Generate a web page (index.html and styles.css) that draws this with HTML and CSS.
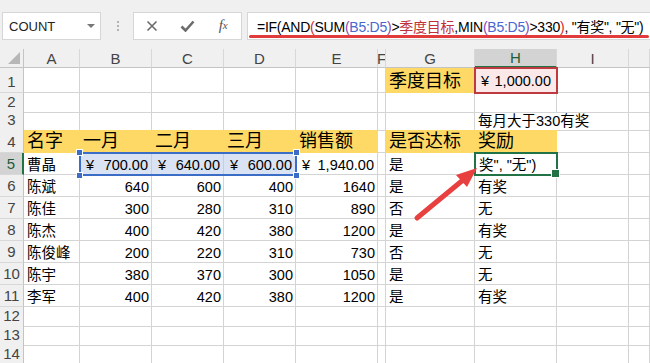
FILE: index.html
```html
<!DOCTYPE html>
<html lang="zh-CN">
<head>
    <meta charset="UTF-8">
    <meta name="viewport" content="width=device-width, initial-scale=1.0">
    <title>销售奖励表</title>
    <link rel="stylesheet" href="styles.css">
</head>
<body>

    <!-- Name box + formula bar -->
    <div class="toolbar">
        <div class="name-box">
            <span>COUNT</span>
            <span class="caret"></span>
        </div>
        <div class="grip"><i></i><i></i><i></i></div>
        <div class="fx-box">
            <span class="slot">
                <svg width="12" height="12" viewBox="0 0 12 12"><path d="M1.5 1.5 L10.5 10.5 M10.5 1.5 L1.5 10.5" stroke="#6b6b6b" stroke-width="1.6" fill="none"/></svg>
            </span>
            <span class="slot">
                <svg width="15" height="12" viewBox="0 0 15 12"><path d="M1.5 6.5 L5.5 10.5 L13.5 1.5" stroke="#6b6b6b" stroke-width="2.6" fill="none"/></svg>
            </span>
            <span class="slot fx">f<sub>x</sub></span>
        </div>
        <div class="formula">
            <span>=IF(AND<span class="p1">(</span>SUM<span class="p2">(</span><span class="ref">B5:D5</span><span class="p2">)</span>&gt;<span class="nm">季度目标</span>,MIN<span class="p2">(</span><span class="ref">B5:D5</span><span class="p2">)</span>&gt;330<span class="p1">)</span>, "有奖", "无")</span>
        </div>
    </div>

    <!-- Worksheet -->
    <div class="sheet">
        <div class="row head">
            <div class="corner"><span></span></div>
            <div class="col">A</div>
            <div class="col">B</div>
            <div class="col">C</div>
            <div class="col">D</div>
            <div class="col">E</div>
            <div class="col">F</div>
            <div class="col">G</div>
            <div class="col on">H</div>
            <div class="col">I</div>
            <div class="col"></div>
        </div>

        <div class="row r1">
            <div class="rh">1</div>
            <div class="c"></div>
            <div class="c"></div>
            <div class="c"></div>
            <div class="c"></div>
            <div class="c"></div>
            <div class="c"></div>
            <div class="c hl big">季度目标</div>
            <div class="c acc target"><span>¥</span><span>1,000.00</span></div>
            <div class="c"></div>
            <div class="c"></div>
        </div>

        <div class="row r2">
            <div class="rh">2</div>
            <div class="c"></div>
            <div class="c"></div>
            <div class="c"></div>
            <div class="c"></div>
            <div class="c"></div>
            <div class="c"></div>
            <div class="c"></div>
            <div class="c"></div>
            <div class="c"></div>
            <div class="c"></div>
        </div>

        <div class="row r3">
            <div class="rh">3</div>
            <div class="c"></div>
            <div class="c"></div>
            <div class="c"></div>
            <div class="c"></div>
            <div class="c"></div>
            <div class="c"></div>
            <div class="c"></div>
            <div class="c spill">每月大于330有奖</div>
            <div class="c"></div>
            <div class="c"></div>
        </div>

        <div class="row r4">
            <div class="rh">4</div>
            <div class="c hl big">名字</div>
            <div class="c hl big">一月</div>
            <div class="c hl big">二月</div>
            <div class="c hl big">三月</div>
            <div class="c hl big">销售额</div>
            <div class="c"></div>
            <div class="c hl big">是否达标</div>
            <div class="c hl big">奖励</div>
            <div class="c"></div>
            <div class="c"></div>
        </div>

        <div class="row rn">
            <div class="rh on">5</div>
            <div class="c">曹晶</div>
            <div class="sel">
                <div class="c acc"><span>¥</span><span>700.00</span></div>
                <div class="c acc"><span>¥</span><span>640.00</span></div>
                <div class="c acc"><span>¥</span><span>600.00</span></div>
                <i class="handle tl"></i>
                <i class="handle tr"></i>
                <i class="handle bl"></i>
                <i class="handle br"></i>
            </div>
            <div class="c acc"><span>¥</span><span>1,940.00</span></div>
            <div class="c"></div>
            <div class="c">是</div>
            <div class="c active">奖", "无")</div>
            <div class="c"></div>
            <div class="c"></div>
        </div>

        <div class="row rn">
            <div class="rh">6</div>
            <div class="c">陈斌</div>
            <div class="c num">640</div>
            <div class="c num">600</div>
            <div class="c num">400</div>
            <div class="c num">1640</div>
            <div class="c"></div>
            <div class="c">是</div>
            <div class="c">有奖</div>
            <div class="c"></div>
            <div class="c"></div>
        </div>

        <div class="row rn">
            <div class="rh">7</div>
            <div class="c">陈佳</div>
            <div class="c num">300</div>
            <div class="c num">280</div>
            <div class="c num">310</div>
            <div class="c num">890</div>
            <div class="c"></div>
            <div class="c">否</div>
            <div class="c">无</div>
            <div class="c"></div>
            <div class="c"></div>
        </div>

        <div class="row rn">
            <div class="rh">8</div>
            <div class="c">陈杰</div>
            <div class="c num">400</div>
            <div class="c num">420</div>
            <div class="c num">380</div>
            <div class="c num">1200</div>
            <div class="c"></div>
            <div class="c">是</div>
            <div class="c">有奖</div>
            <div class="c"></div>
            <div class="c"></div>
        </div>

        <div class="row rn">
            <div class="rh">9</div>
            <div class="c">陈俊峰</div>
            <div class="c num">200</div>
            <div class="c num">220</div>
            <div class="c num">310</div>
            <div class="c num">730</div>
            <div class="c"></div>
            <div class="c">否</div>
            <div class="c">无</div>
            <div class="c"></div>
            <div class="c"></div>
        </div>

        <div class="row rn">
            <div class="rh">10</div>
            <div class="c">陈宇</div>
            <div class="c num">380</div>
            <div class="c num">370</div>
            <div class="c num">300</div>
            <div class="c num">1050</div>
            <div class="c"></div>
            <div class="c">是</div>
            <div class="c">无</div>
            <div class="c"></div>
            <div class="c"></div>
        </div>

        <div class="row rn">
            <div class="rh">11</div>
            <div class="c">李军</div>
            <div class="c num">400</div>
            <div class="c num">420</div>
            <div class="c num">380</div>
            <div class="c num">1200</div>
            <div class="c"></div>
            <div class="c">是</div>
            <div class="c">有奖</div>
            <div class="c"></div>
            <div class="c"></div>
        </div>

        <div class="row re">
            <div class="rh">12</div>
            <div class="c"></div><div class="c"></div><div class="c"></div><div class="c"></div><div class="c"></div>
            <div class="c"></div><div class="c"></div><div class="c"></div><div class="c"></div><div class="c"></div>
        </div>
        <div class="row re">
            <div class="rh">13</div>
            <div class="c"></div><div class="c"></div><div class="c"></div><div class="c"></div><div class="c"></div>
            <div class="c"></div><div class="c"></div><div class="c"></div><div class="c"></div><div class="c"></div>
        </div>
        <div class="row re">
            <div class="rh">14</div>
            <div class="c"></div><div class="c"></div><div class="c"></div><div class="c"></div><div class="c"></div>
            <div class="c"></div><div class="c"></div><div class="c"></div><div class="c"></div><div class="c"></div>
        </div>
    </div>

    <!-- Red callout arrow -->
    <svg class="arrow" width="650" height="363" viewBox="0 0 650 363">
        <line x1="417" y1="218" x2="463" y2="180" stroke="#e8403f" stroke-width="5" stroke-linecap="round"/>
        <polygon points="477,168 456,175 467,187" fill="#e8403f"/>
    </svg>

</body>
</html>
```

FILE: styles.css
```css
/* Global */
* {
    box-sizing: border-box;
}

html, body {
    margin: 0;
    padding: 0;
}

body {
    width: 650px;
    height: 363px;
    overflow: hidden;
    position: relative;
    background: #fff;
    color: #000;
    font-family: "Liberation Sans", "Noto Sans CJK SC", sans-serif;
}

/* Formula bar */
.toolbar {
    height: 49px;
    background: #f0f0f0;
    display: flex;
    align-items: flex-start;
    padding: 12px 0 0 2px;
}

.toolbar > * {
    flex-shrink: 0;
}

.name-box {
    width: 99px;
    height: 28px;
    background: #fff;
    border: 1px solid #d6d6d6;
    display: flex;
    align-items: center;
    justify-content: space-between;
    padding: 0 5px 0 6px;
    font-size: 13px;
    color: #222;
}

.caret {
    border-left: 4px solid transparent;
    border-right: 4px solid transparent;
    border-top: 4px solid #777;
}

.grip {
    display: flex;
    flex-direction: column;
    gap: 2px;
    margin: 9px 14px 0 16px;
}

.grip i {
    display: block;
    width: 2px;
    height: 2px;
    background: #b3b3b3;
}

.fx-box {
    width: 109px;
    height: 28px;
    background: #fff;
    border: 1px solid #d6d6d6;
    display: flex;
}

.fx-box .slot {
    flex: 1;
    display: flex;
    align-items: center;
    justify-content: center;
}

.fx {
    font-family: "Liberation Serif", serif;
    font-style: italic;
    font-size: 15px;
    color: #555;
    padding-bottom: 2px;
}

.fx sub {
    font-size: 11px;
    vertical-align: -1px;
}

.formula {
    width: 410px;
    height: 28px;
    margin-left: 5px;
    background: #fff;
    border: 1px solid #d6d6d6;
    display: flex;
    align-items: center;
    padding: 0 0 1px 9px;
    font-size: 14px;
    letter-spacing: -0.25px;
    white-space: nowrap;
    position: relative;
}

/* red highlight under the formula */
.formula::after {
    content: "";
    position: absolute;
    left: 1px;
    width: 400px;
    bottom: 1px;
    height: 3px;
    border-radius: 2px;
    background: #e23b3b;
}

.formula .p1 { color: #d9262c; }
.formula .p2 { color: #8e44ad; }
.formula .ref { color: #4a66cf; }
.formula .nm { color: #c0313a; }

/* Worksheet grid */
.row {
    display: grid;
    grid-template-columns: 24px 56px 72px 72px 72px 82px 8px 89px 82px 72px 1fr;
}

.head { height: 19px; }
.r1 { height: 25px; }
.r2 { height: 18px; }
.r3 { height: 19px; }
.r4 { height: 23px; }
.rn { height: 22px; }
.re { height: 19px; }

.corner {
    background: #f0f0f0;
    border-right: 1px solid #c4c4c4;
    border-bottom: 1px solid #c4c4c4;
    display: flex;
    align-items: flex-end;
    justify-content: flex-end;
    padding: 0 3px 3px 0;
}

.corner span {
    width: 0;
    height: 0;
    border-left: 12px solid transparent;
    border-bottom: 12px solid #b7b7b7;
}

.col {
    background: #f0f0f0;
    border-right: 1px solid #d8d8d8;
    border-bottom: 1px solid #c4c4c4;
    font-size: 15px;
    color: #444;
    display: flex;
    align-items: flex-end;
    justify-content: center;
    line-height: 17px;
    overflow: hidden;
}

.col.on {
    background: #d3d3d3;
    color: #1f5c3a;
    border-bottom: 2px solid #217346;
}

.rh {
    background: #f0f0f0;
    border-right: 1px solid #c4c4c4;
    border-bottom: 1px solid #d8d8d8;
    font-size: 15px;
    color: #444;
    display: flex;
    align-items: flex-end;
    justify-content: center;
    line-height: 17px;
    padding-bottom: 2px;
}

.rh.on {
    background: #d3d3d3;
    color: #1f5c3a;
    border-right: 2px solid #217346;
}

.c {
    border-right: 1px solid #d4d4d4;
    border-bottom: 1px solid #d4d4d4;
    display: flex;
    align-items: flex-end;
    padding: 0 3px 0 3px;
    font-size: 14.5px;
    line-height: 17px;
    white-space: nowrap;
}

.num {
    justify-content: flex-end;
    padding-right: 2px;
}

.acc {
    justify-content: space-between;
    padding: 0 3px 0 6px;
}

.hl {
    background: #ffd966;
    border-color: #ffd966;
}

.big {
    font-size: 18px;
    line-height: 21px;
    padding-bottom: 0;
}

.spill {
    border-right-color: transparent;
    padding-bottom: 0;
}

.target {
    background: #fbe9ea;
    position: relative;
    z-index: 1;
    outline: 2px solid #be3a40;
    outline-offset: -1px;
    padding: 0 5px 2px 6px;
    font-size: 14.5px;
}

/* B5:D5 selection */
.sel {
    grid-column: span 3;
    display: grid;
    grid-template-columns: repeat(3, 1fr);
    background: #dae3f3;
    position: relative;
    z-index: 1;
    outline: 2px solid #3b6dc7;
    outline-offset: -1px;
}

.sel .c {
    border-color: #c5cede;
}

.handle {
    position: absolute;
    width: 7px;
    height: 7px;
    background: #3b6dc7;
    border: 1px solid #fff;
}

.handle.tl { left: -4px; top: -4px; }
.handle.tr { right: -4px; top: -4px; }
.handle.bl { left: -4px; bottom: -4px; }
.handle.br { right: -4px; bottom: -4px; }

/* active cell H5 */
.active {
    position: relative;
    z-index: 1;
    outline: 2px solid #217346;
    outline-offset: -1px;
    padding-left: 4px;
}

.active::after {
    content: "";
    position: absolute;
    right: -4px;
    bottom: -4px;
    width: 7px;
    height: 7px;
    background: #217346;
    border: 1px solid #fff;
}

.arrow {
    position: absolute;
    left: 0;
    top: 0;
    z-index: 5;
    pointer-events: none;
}
```
